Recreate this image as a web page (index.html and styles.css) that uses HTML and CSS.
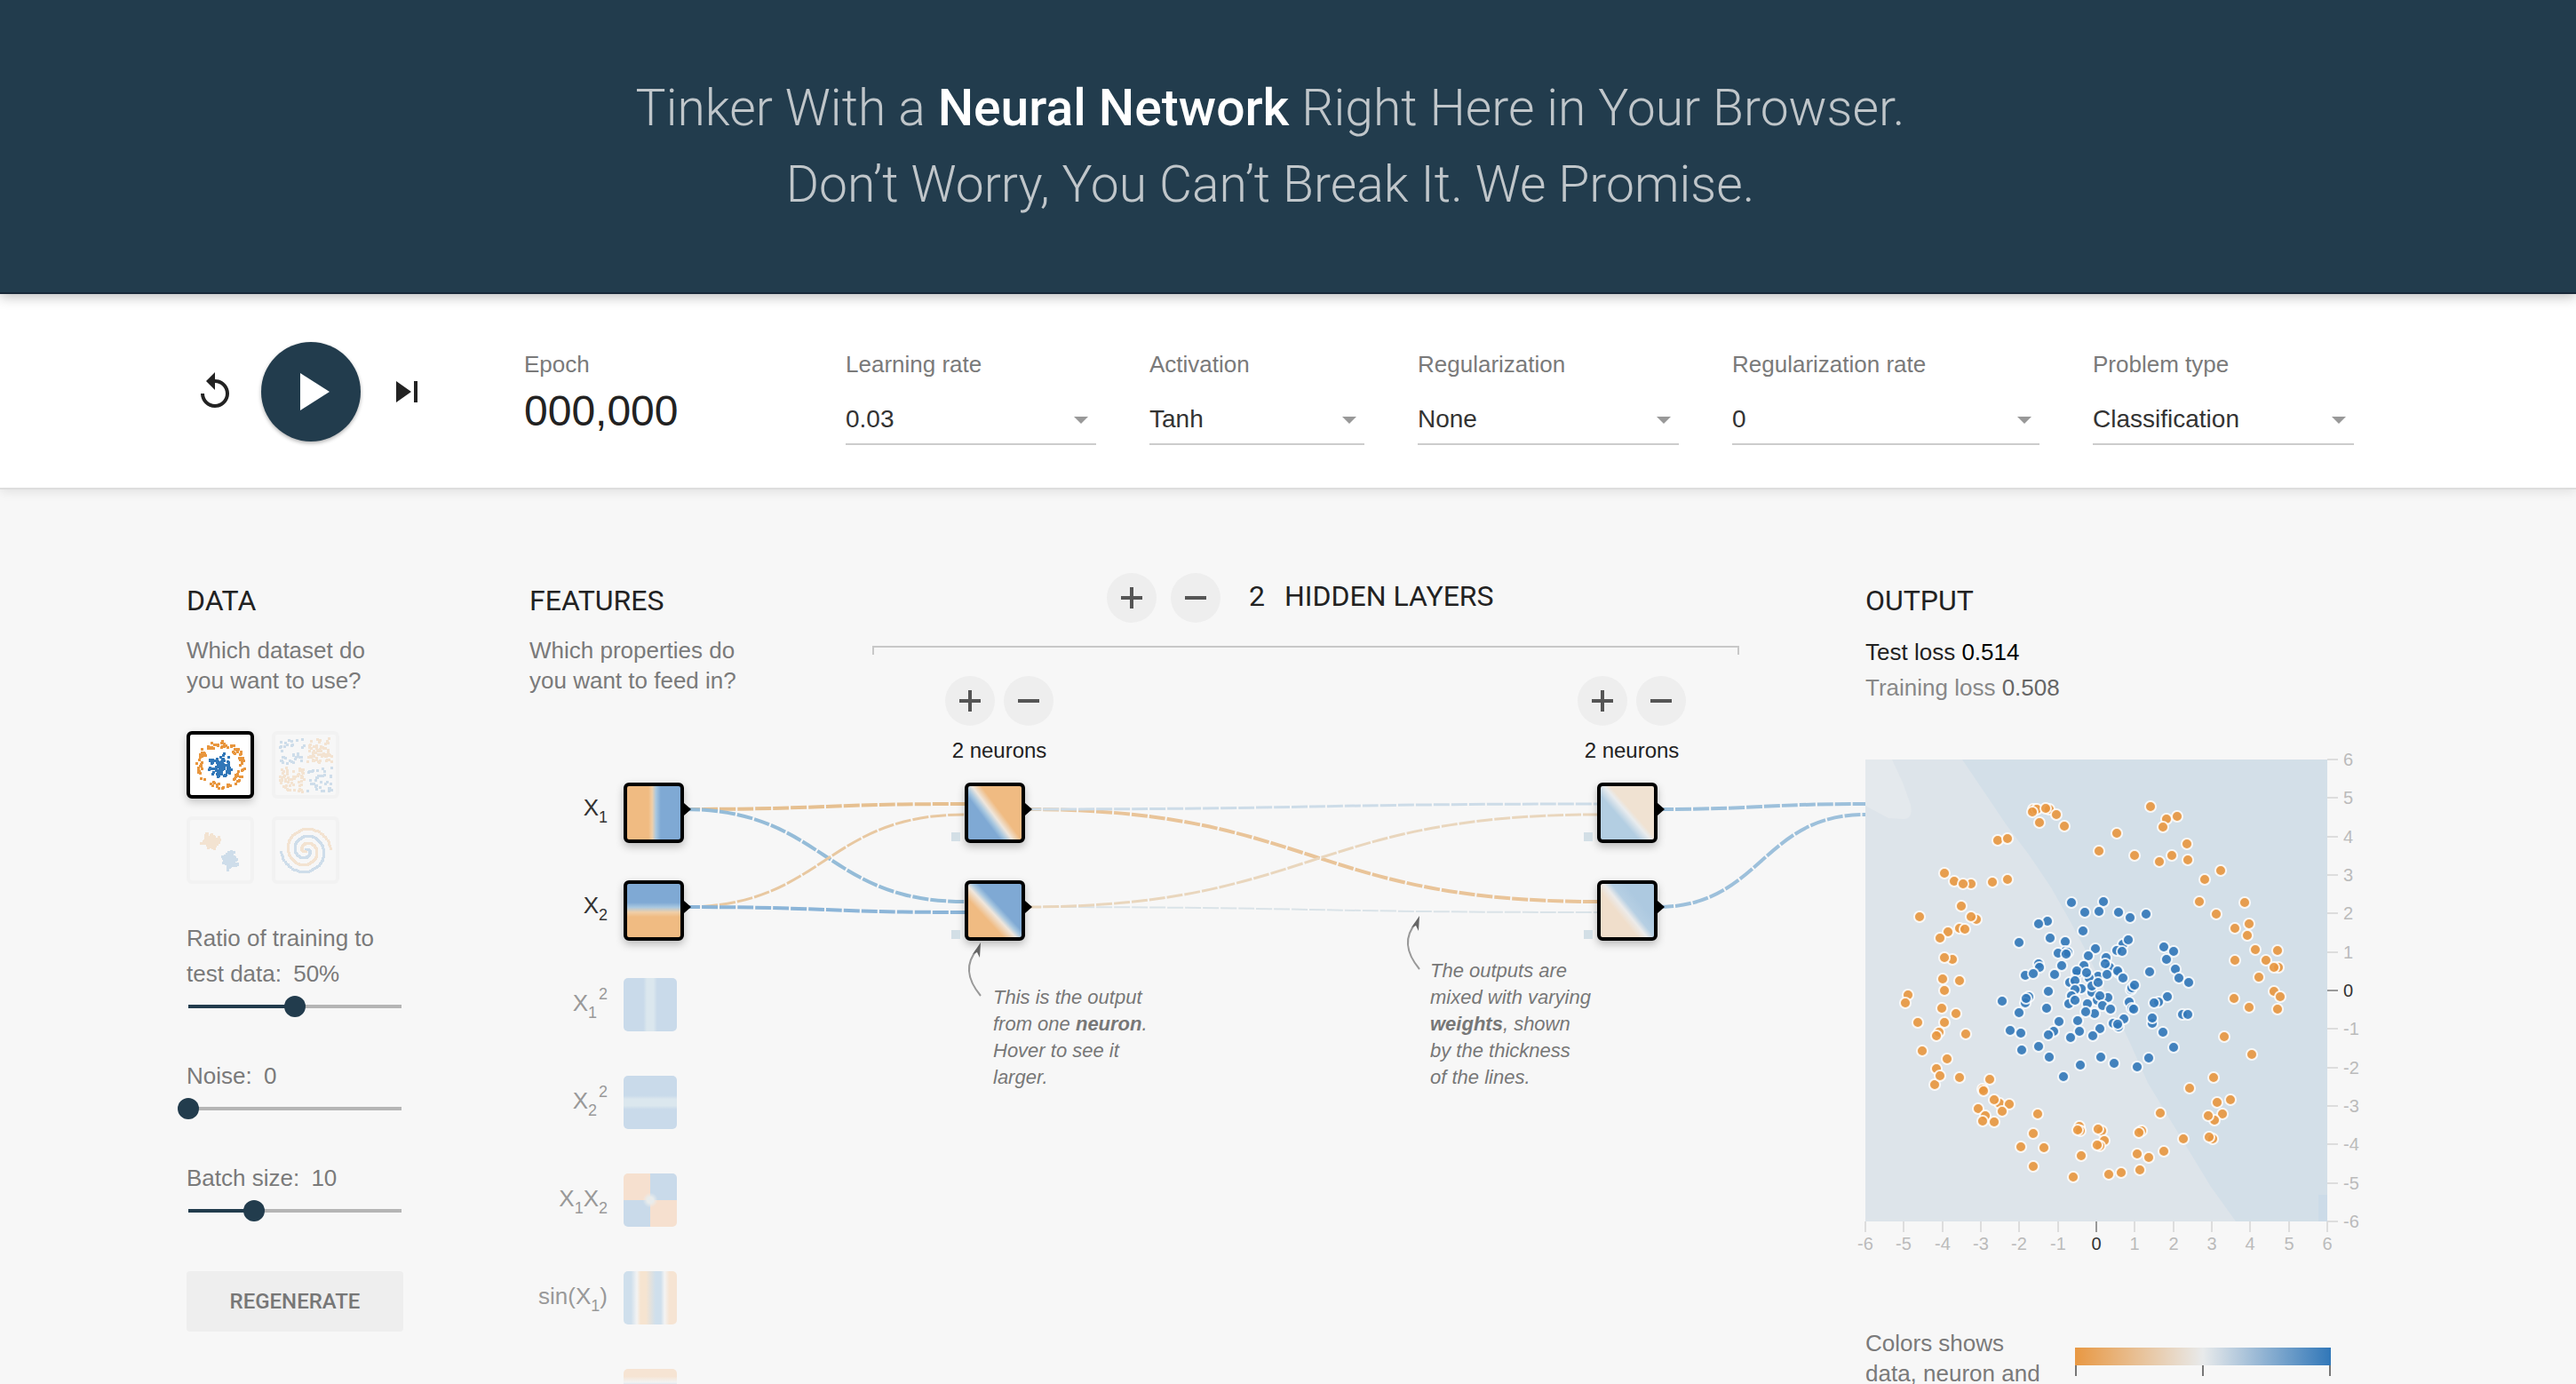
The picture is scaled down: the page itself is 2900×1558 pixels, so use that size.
FILE: index.html
```html
<!DOCTYPE html>
<html lang="en">
<head>
<meta charset="utf-8">
<title>Neural Network Playground</title>
<link rel="stylesheet" href="styles.css">
</head>
<body>
<header class="banner">
  <h1>Tinker With a <b>Neural Network</b> Right Here in Your Browser.<br>Don’t Worry, You Can’t Break It. We Promise.</h1>
</header>

<section class="controls">
  <div class="timeline">
    <button class="icon-button" aria-label="Reset"><svg viewBox="0 0 24 24"><path d="M12 5V1L7 6l5 5V7c3.31 0 6 2.69 6 6s-2.69 6-6 6-6-2.69-6-6H4c0 4.42 3.58 8 8 8s8-3.58 8-8-3.58-8-8-8z"/></svg></button>
    <button class="play-button" aria-label="Run"><svg viewBox="0 0 24 24"><path d="M8 5v14l11-7z"/></svg></button>
    <button class="icon-button" aria-label="Step"><svg viewBox="0 0 24 24"><path d="M6 18l8.500-6L6 6v12zM16 6v12h2V6h-2z"/></svg></button>
  </div>
  <div class="epoch"><span class="label">Epoch</span><output class="epoch-value">000,000</output></div>
  <div class="fields">
    <div class="field field-learning"><label class="label" for="lr">Learning rate</label><div class="select"><select id="lr"><option>0.03</option></select></div></div>
    <div class="field field-activation"><label class="label" for="act">Activation</label><div class="select"><select id="act"><option>Tanh</option></select></div></div>
    <div class="field field-regularization"><label class="label" for="reg">Regularization</label><div class="select"><select id="reg"><option>None</option></select></div></div>
    <div class="field field-rate"><label class="label" for="regrate">Regularization rate</label><div class="select"><select id="regrate"><option>0</option></select></div></div>
    <div class="field field-problem"><label class="label" for="problem">Problem type</label><div class="select"><select id="problem"><option>Classification</option></select></div></div>
  </div>
</section>

<main class="main">
  <section class="data">
    <h2 class="column-title">Data</h2>
    <p class="intro">Which dataset do<br>you want to use?</p>
    <div class="datasets">
      <button class="dataset selected" aria-label="Circle"><svg id="thumb-circle" viewBox="0 0 68 68"></svg></button>
      <button class="dataset" aria-label="Exclusive or"><svg id="thumb-xor" viewBox="0 0 68 68"></svg></button>
      <button class="dataset" aria-label="Gaussian"><svg id="thumb-gauss" viewBox="0 0 68 68"></svg></button>
      <button class="dataset" aria-label="Spiral"><svg id="thumb-spiral" viewBox="0 0 68 68"></svg></button>
    </div>
    <div class="slider"><label for="ratio"><span>Ratio of training to</span><br><span>test data:</span> <span class="value">50%</span></label><input type="range" id="ratio" min="10" max="90" value="50" style="--at:120px"></div>
    <div class="slider"><label for="noise"><span>Noise:</span> <span class="value">0</span></label><input type="range" id="noise" min="0" max="50" value="0" style="--at:0px"></div>
    <div class="slider"><label for="batch"><span>Batch size:</span> <span class="value">10</span></label><input type="range" id="batch" min="1" max="30" value="10" style="--at:74px"></div>
    <button class="regenerate">Regenerate</button>
  </section>

  <section class="network">
    <svg class="links" width="1504" height="480" viewBox="0 0 1504 480">
      <g fill="none" stroke-dasharray="18 2">
        <path d="M174 30C332 30 332 24 490 24" stroke="#e6c091" stroke-width="4"/>
        <path d="M174 30C332 30 332 134 490 134" stroke="#95bcd8" stroke-width="4"/>
        <path d="M174 140C332 140 332 36 490 36" stroke="#e8c8a1" stroke-width="3"/>
        <path d="M174 140C332 140 332 146 490 146" stroke="#8cb5d8" stroke-width="4"/>
        <path d="M558 30C880 30 880 134 1202 134" stroke="#e9c499" stroke-width="4"/>
        <path d="M558 30C880 30 880 24 1202 24" stroke="#cddce8" stroke-width="3"/>
        <path d="M558 140C880 140 880 146 1202 146" stroke="#dae3e8" stroke-width="2"/>
        <path d="M558 140C880 140 880 36 1202 36" stroke="#e9d6bd" stroke-width="3"/>
        <path d="M1270 30C1387 30 1387 24 1504 24" stroke="#9dc0db" stroke-width="4"/>
        <path d="M1270 140C1387 140 1387 36 1504 36" stroke="#9dc0db" stroke-width="4"/>
      </g>
      <g fill="none" stroke="#999" stroke-width="2">
        <path d="M508 240Q484 211 504 188"/>
        <path d="M1002 210Q978 181 998 158"/>
      </g>
      <path d="M508 180l-9 13 5-2 3 6zM1002 150l-9 13 5-2 3 6z" fill="#666"/>
    </svg>
    <div class="features">
      <h2 class="column-title">Features</h2>
      <p class="intro">Which properties do<br>you want to feed in?</p>
      <ul class="feature-list">
        <li class="on"><span class="name">X<sub>1</sub></span><i class="node active heat-x1"></i></li>
        <li class="on"><span class="name">X<sub>2</sub></span><i class="node active heat-x2"></i></li>
        <li><span class="name">X<sub>1</sub><sup>2</sup></span><i class="node heat-x1sq"></i></li>
        <li><span class="name">X<sub>2</sub><sup>2</sup></span><i class="node heat-x2sq"></i></li>
        <li><span class="name">X<sub>1</sub>X<sub>2</sub></span><i class="node heat-product"></i></li>
        <li><span class="name">sin(X<sub>1</sub>)</span><i class="node heat-sin1"></i></li>
        <li><span class="name"></span><i class="node heat-sin2"></i></li>
      </ul>
    </div>
    <div class="hidden-layers">
      <div class="layers-head">
        <button class="round" aria-label="Add layer"><svg viewBox="0 0 24 24"><path d="M0 10h24v4H0zM10 0h4v24h-4z"/></svg></button>
        <button class="round" aria-label="Remove layer"><svg viewBox="0 0 24 24"><path d="M0 10h24v4H0z"/></svg></button>
        <span class="layers-title"><span>2</span><span>Hidden layers</span></span>
      </div>
      <div class="bracket"></div>
      <div class="layers">
        <div class="layer">
          <div class="layer-buttons">
            <button class="round" aria-label="Add neuron"><svg viewBox="0 0 24 24"><path d="M0 10h24v4H0zM10 0h4v24h-4z"/></svg></button>
            <button class="round" aria-label="Remove neuron"><svg viewBox="0 0 24 24"><path d="M0 10h24v4H0z"/></svg></button>
          </div>
          <div class="neurons">2 neurons</div>
          <i class="node active biased heat-h1"></i>
          <i class="node active biased heat-h2"></i>
        </div>
        <div class="layer">
          <div class="layer-buttons">
            <button class="round" aria-label="Add neuron"><svg viewBox="0 0 24 24"><path d="M0 10h24v4H0zM10 0h4v24h-4z"/></svg></button>
            <button class="round" aria-label="Remove neuron"><svg viewBox="0 0 24 24"><path d="M0 10h24v4H0z"/></svg></button>
          </div>
          <div class="neurons">2 neurons</div>
          <i class="node active biased heat-o1"></i>
          <i class="node active biased heat-o2"></i>
        </div>
      </div>
    </div>
    <p class="callout callout-neuron">This is the output<br>from one <b>neuron</b>.<br>Hover to see it<br>larger.</p>
    <p class="callout callout-weights">The outputs are<br>mixed with varying<br><b>weights</b>, shown<br>by the thickness<br>of the lines.</p>
  </section>

  <section class="output">
    <h2 class="column-title">Output</h2>
    <div class="losses">
      <div class="loss test">Test loss <b>0.514</b></div>
      <div class="loss train">Training loss <b>0.508</b></div>
    </div>
    <svg class="plot" width="520" height="560" viewBox="0 0 520 560">
      <rect width="520" height="520" fill="#dde4ea"/>
      <path d="M109 0L130 31L159 74L184 107L209 144L230 181L245 209L270 260L297 317L318 364L344 407L389 481L417 520H520V0z" fill="#d3dfe8"/>
      <path d="M0 0H30L42 26L51 51Q54 68 42 67L26 66L0 52z" fill="#e4e9ed"/>
      <path d="M510 490h10v30h-10z" fill="#ccdbe8"/>
      <g id="axes"></g>
      <g id="points"></g>
    </svg>
    <div class="legend">
      <p>Colors shows<br>data, neuron and</p>
      <div class="scale"><div class="scale-bar"></div><div class="scale-ticks"><i></i><i></i><i></i></div></div>
    </div>
  </section>
</main>
<script src="script.js"></script>
</body>
</html>
```
FILE: styles.css
```css
* { box-sizing: border-box; }
body {
  margin: 0;
  height: 100vh;
  overflow: hidden;
  background: #f7f7f7;
  color: #222;
  font: 26px/34px "Liberation Sans", Arial, sans-serif;
}
h1, h2, p, ul { margin: 0; padding: 0; font-weight: 400; }
ul { list-style: none; }
button { border: 0; padding: 0; background: none; cursor: pointer; }

.banner {
  position: relative;
  padding: 79px 40px 78px 0;
  background: #223c4d;
  border-bottom: 2px solid #182838;
  box-shadow: 0 2px 14px rgba(0, 0, 0, .3);
  text-align: center;
}
.banner h1 {
  color: #c0c6ca;
  font: 300 57px/86px Roboto, sans-serif;
}
.banner b { color: #fff; font-weight: 500; }

.controls {
  display: flex;
  align-items: flex-start;
  height: 220px;
  padding: 54px 250px 0 218px;
  background: #fff;
  border-bottom: 2px solid #ddd;
  box-shadow: 0 2px 12px rgba(0, 0, 0, .1);
}
.timeline { display: flex; align-items: center; gap: 28px; }
.icon-button, .icon-button svg { width: 48px; height: 48px; display: block; fill: #222; }
.play-button {
  display: flex;
  align-items: center;
  justify-content: center;
  width: 112px;
  height: 112px;
  border-radius: 50%;
  background: #223c4d;
  box-shadow: 0 2px 4px rgba(0, 0, 0, .3);
}
.play-button svg { width: 72px; fill: #fff; }
.label { display: block; color: #7a7a7a; }
.epoch { width: 362px; margin-left: 108px; padding-top: 8px; flex: none; }
.epoch-value { display: block; margin-top: 8px; font-size: 48px; line-height: 56px; }
.fields { display: flex; flex: 1; gap: 60px; padding-top: 8px; }
.field { min-width: 0; }
.field-learning { flex: 282 1 0; }
.field-activation { flex: 242 1 0; }
.field-regularization { flex: 294 1 0; }
.field-rate { flex: 346 1 0; }
.field-problem { flex: 294 1 0; }
.select { position: relative; margin-top: 16px; }
.select::after {
  content: "";
  position: absolute;
  right: 9px;
  top: 26px;
  border: 8px solid transparent;
  border-top-color: #999;
  border-bottom: 0;
  pointer-events: none;
}
.select select {
  display: block;
  width: 100%;
  height: 58px;
  padding: 0;
  appearance: none;
  background: none;
  border: 0;
  border-bottom: 2px solid #ccc;
  border-radius: 0;
  color: #333;
  font: 28px "Liberation Sans", Arial, sans-serif;
}

.main {
  display: grid;
  grid-template-columns: 386px 1fr 550px;
  align-items: start;
  padding: 94px 250px 0 210px;
}
.column-title {
  padding-top: 11px;
  font: 400 32px/40px Roboto, sans-serif;
  text-transform: uppercase;
}
.intro { margin-top: 19px; color: #7a7a7a; }

.data { width: 244px; }
.datasets { display: grid; grid-template-columns: 76px 76px; gap: 20px; margin-top: 40px; }
.dataset {
  width: 76px;
  height: 76px;
  border: 4px solid #f2f2f2;
  border-radius: 6px;
}
.dataset svg { display: block; opacity: .2; }
.dataset.selected { background: #fff; border-color: #000; box-shadow: 0 4px 10px rgba(0, 0, 0, .2); }
.dataset.selected svg { opacity: 1; }
.slider { margin-top: 46px; color: #7a7a7a; line-height: 40px; }
.datasets + .slider { margin-top: 41px; }
.slider label { display: block; }
.slider .value { margin-left: 6px; }
.slider input {
  display: block;
  appearance: none;
  width: 264px;
  height: 24px;
  margin: 5px 0 0 -10px;
  background: none;
}
.slider input::-webkit-slider-runnable-track {
  height: 4px;
  background: linear-gradient(90deg, transparent 12px, #223c4d 12px calc(12px + var(--at)), #b5b5b5 calc(12px + var(--at)) 252px, transparent 252px);
}
.slider input::-webkit-slider-thumb {
  appearance: none;
  width: 24px;
  height: 24px;
  margin-top: -10px;
  border-radius: 50%;
  background: #223c4d;
}
.regenerate {
  width: 244px;
  height: 68px;
  margin-top: 56px;
  border-radius: 4px;
  background: #eee;
  color: #777;
  font: 500 24px Roboto, sans-serif;
  text-transform: uppercase;
}

.network { position: relative; display: grid; grid-template-columns: 386px 1fr; }
.links { position: absolute; left: 0; top: 236px; }
.feature-list { position: relative; margin-top: 98px; }
.feature-list li { display: flex; gap: 18px; height: 110px; color: #999; }
.feature-list li.on { color: #333; }
.name { width: 88px; text-align: right; line-height: 56px; white-space: nowrap; }
.name sub, .name sup { font-size: 18px; line-height: 0; }
.name sub { vertical-align: -8px; }
.name sup { vertical-align: 13px; margin-left: 2px; }
.node { position: relative; flex: none; display: block; width: 60px; height: 60px; border-radius: 5px; }
.node.active {
  width: 68px;
  height: 68px;
  border: 4px solid #000;
  border-radius: 6px;
  background-origin: padding-box;
  box-shadow: 0 4px 10px rgba(0, 0, 0, .25);
}
.node.active::after {
  content: "";
  position: absolute;
  left: 64px;
  top: 19px;
  border: 7px solid transparent;
  border-left: 8px solid #000;
  border-right: 0;
}
.node.biased::before {
  content: "";
  position: absolute;
  left: -19px;
  top: 52px;
  width: 10px;
  height: 10px;
  background: #d3dfe6;
}
.heat-x1 { background-image: linear-gradient(90deg, #f0bb82 40%, #f0cfa8 47%, #a9c8e0 54%, #7fa9d4 63%); }
.heat-x2 { background-image: linear-gradient(#7fa9d4 35%, #a9c8e0 44%, #f0cfa8 53%, #f0bb82 62%); }
.heat-x1sq { background-image: linear-gradient(90deg, #c9daea 37%, #dbe7ee 44% 56%, #c9daea 63%); }
.heat-x2sq { background-image: linear-gradient(#c9daea 37%, #dbe7ee 44% 56%, #c9daea 63%); }
.heat-product {
  background-image: radial-gradient(#e9ecec 8%, transparent 20%), conic-gradient(#c9daea 25%, #f6e0cf 25% 50%, #c9daea 50% 75%, #f6e0cf 75%);
}
.heat-sin1 { background-image: linear-gradient(90deg, #cfdfec 14%, #f3f3f3 25%, #f6e4d0 32% 42%, #cfdfec 60% 70%, #f3f3f3 77%, #f6e4d3 86%); }
.heat-sin2 { background-image: linear-gradient(#f6e4d3 14%, #f3f3f3 25%, #cfdfec 32%); }
.heat-h1 { background-image: linear-gradient(53deg, #7fa9d4 34%, #a9c8e0 40%, #efe6dc 47%, #f0bb82 57%); }
.heat-h2 { background-image: linear-gradient(47deg, #f0bb82 34%, #efe6dc 46%, #a9c8e0 52%, #7fa9d4 58%); }
.heat-o1 { background-image: linear-gradient(49deg, #b3cee2 38%, #e9ecee 50%, #f0e2d2 56%); }
.heat-o2 { background-image: linear-gradient(51deg, #f0decb 38%, #ecebea 48%, #b6cfe3 56%, #adc9e0 70%); }

.hidden-layers { padding-right: 142px; }
.layers-head { display: flex; align-items: center; gap: 16px; padding-left: 264px; }
.layers-title { display: flex; gap: 22px; margin-left: 16px; padding-bottom: 4px; font: 32px/40px Roboto, sans-serif; text-transform: uppercase; }
.round {
  display: flex;
  align-items: center;
  justify-content: center;
  width: 56px;
  height: 56px;
  border-radius: 50%;
  background: #eee;
}
.round svg { width: 24px; fill: #555; }
.bracket { height: 10px; margin-top: 26px; border: 2px solid #c8c8c8; border-bottom: 0; }
.layers { display: flex; justify-content: space-between; padding: 24px 60px 0 82px; }
.layer { width: 122px; }
.layer-buttons { display: flex; justify-content: space-between; }
.neurons { margin: 11px 0 19px; font-size: 24px; text-align: center; white-space: nowrap; }
.layer .node { margin: 0 0 42px 22px; }
.callout { position: absolute; color: #777; font-size: 22px; line-height: 30px; font-style: italic; white-space: nowrap; }
.callout-neuron { left: 522px; top: 463px; }
.callout-weights { left: 1014px; top: 433px; }

.losses { margin-top: 18px; }
.loss { line-height: 40px; }
.loss b { font-weight: 400; }
.test b { color: #000; }
.train { color: #888; }
.train b { color: #666; }
.plot { display: block; margin-top: 61px; overflow: visible; }
.plot circle { stroke: #fff; stroke-opacity: .85; stroke-width: 2px; fill-opacity: .9; }
.plot text { font-size: 20px; fill: #bbb; }
.plot text.zero { fill: #333; }
.legend { display: flex; width: 524px; margin-top: 80px; color: #7a7a7a; justify-content: space-between; }
.scale { width: 288px; margin-top: 22px; }
.scale-bar { height: 20px; background: linear-gradient(90deg, #e89843, #e8eaeb 50%, #3177b8); }
.scale-ticks { display: flex; justify-content: space-between; }
.scale-ticks i { width: 2px; height: 12px; background: #777; }
```
FILE: script.js
```js
const NS = 'http://www.w3.org/2000/svg';
const ORANGE = '#e8963e';
const BLUE = '#3177b8';

function add(parent, name, attrs, text) {
  const el = document.createElementNS(NS, name);
  for (const key in attrs) el.setAttribute(key, attrs[key]);
  if (text !== undefined) el.textContent = text;
  parent.appendChild(el);
}

// Plot points as x,y pairs in plot pixels.
const orange = `189,56 193,56 188,59 207,56 203,55 215,62 196,71 224,75 321,53 339,67 351,64 335,76 283,83
362,95 263,103 303,108 331,115 345,108 363,113 400,125 382,135 376,160 427,161 395,174 416,190 432,185 430,198
439,214 464,215 451,226 416,226 465,234 460,234 443,245 460,261 467,267 415,269 432,279 464,281 149,91 160,89
89,128 100,137 119,140 110,140 143,138 160,135 108,165 61,177 125,180 119,177 106,190 112,191 93,194 84,201
98,225 89,223 87,247 106,249 89,260 48,265 45,274 86,280 102,286 59,296 89,296 83,307 80,311 113,309 64,328
92,337 80,348 78,366 84,356 106,358 140,360 132,371 133,373 151,387 145,383 162,388 127,393 154,396 135,401
132,407 145,408 194,399 189,421 175,436 201,437 189,458 234,470 241,413 242,418 239,417 266,418 262,416 269,429
264,435 261,434 243,446 311,418 308,420 332,398 274,467 288,465 309,462 306,444 319,448 336,441 358,427 365,370
392,358 411,383 396,386 402,399 393,406 386,401 391,427 387,425 404,312 435,332`;
const blue = `232,161 268,160 247,172 263,171 285,172 298,178 316,174 205,182 195,185 245,193 173,206 208,201
225,205 259,213 290,208 296,203 283,215 289,216 225,216 228,217 217,218 226,219 251,221 271,223 336,211 347,216
339,225 195,230 196,234 221,232 246,232 275,234 270,230 180,243 189,241 213,242 238,241 238,238 262,244 252,246
249,240 272,242 285,240 284,238 320,239 349,236 290,246 353,246 364,251 230,251 236,249 255,262 255,255 262,251
243,258 236,259 299,259 300,257 303,254 206,261 232,266 184,267 180,274 181,269 154,272 273,268 261,271 264,266
340,267 330,273 325,274 297,273 229,275 236,271 250,275 267,277 276,281 204,280 300,280 302,281 173,285 258,286
248,284 357,287 363,287 323,297 323,291 291,292 218,295 239,294 279,297 285,301 284,298 264,303 163,305 175,308
212,306 206,310 241,306 231,313 256,311 335,307 347,324 176,327 195,323 207,335 242,344 265,335 280,342 306,346
319,336 223,357`;
const points = document.getElementById('points');
for (const [list, fill] of [[orange, ORANGE], [blue, BLUE]]) {
  for (const pair of list.split(/\s+/)) {
    const [cx, cy] = pair.split(',');
    add(points, 'circle', { cx, cy, r: 6, fill });
  }
}

const axes = document.getElementById('axes');
for (let v = -6; v <= 6; v++) {
  const at = Math.round((v + 6) * 520 / 12);
  const color = v === 0 ? '#999' : '#ddd';
  const cls = v === 0 ? 'zero' : '';
  add(axes, 'path', { d: `M${at} 520v12M520 ${520 - at}h12`, stroke: color, 'stroke-width': 2 });
  add(axes, 'text', { x: at, y: 552, 'text-anchor': 'middle', class: cls }, v);
  add(axes, 'text', { x: 538, y: 527 - at, class: cls }, v);
}

// Dataset thumbnails, drawn from a repeatable random sequence.
let seed = 7;
function random(a, b) {
  seed = (seed * 16807) % 2147483647;
  return a + (b - a) * seed / 2147483647;
}
function dot(id, x, y, fill) {
  add(document.getElementById(id), 'rect', { x: Math.round(33 + x * 5.6), y: Math.round(33 - y * 5.6), width: 3, height: 3, fill });
}
for (let i = 0; i < 110; i++) {
  const a = random(0, 2 * Math.PI), b = random(0, 2 * Math.PI);
  const inner = random(0, 2.5), outer = random(3.6, 4.9);
  dot('thumb-circle', inner * Math.cos(a), inner * Math.sin(a), BLUE);
  dot('thumb-circle', outer * Math.cos(b), outer * Math.sin(b), ORANGE);
}
for (let i = 0; i < 200; i++) {
  const x = random(-5, 5), y = random(-5, 5);
  dot('thumb-xor', x + Math.sign(x) * .3, y + Math.sign(y) * .3, x * y > 0 ? ORANGE : BLUE);
}
for (let i = 0; i < 100; i++) {
  const a = random(0, 2 * Math.PI), r = random(0, 1) + random(0, 1);
  dot('thumb-gauss', -2 + r * Math.cos(a), 2 + r * Math.sin(a), ORANGE);
  dot('thumb-gauss', 2 + r * Math.sin(a), -2 + r * Math.cos(a), BLUE);
}
for (let i = 0; i < 130; i++) {
  const r = i / 130 * 5, t = 3.5 * Math.PI * i / 130;
  dot('thumb-spiral', r * Math.sin(t), r * Math.cos(t), BLUE);
  dot('thumb-spiral', -r * Math.sin(t), -r * Math.cos(t), ORANGE);
}
```
